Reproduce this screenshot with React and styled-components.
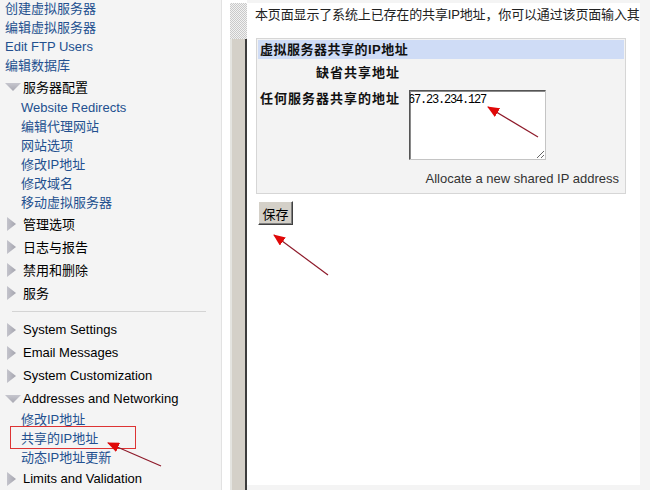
import React from "react";
import styled, { createGlobalStyle } from "styled-components";

const GlobalStyle = createGlobalStyle`
  body {
    margin: 0;
    overflow: hidden;
    background: #f4f4f4;
  }
`;

const FONT = `"Liberation Sans", "Noto Sans CJK SC", Arial, sans-serif`;

const navTop = ["创建虚拟服务器", "编辑虚拟服务器", "Edit FTP Users", "编辑数据库"];

const serverLinks = [
  "Website Redirects",
  "编辑代理网站",
  "网站选项",
  "修改IP地址",
  "修改域名",
  "移动虚拟服务器",
];

const moduleGroups = ["管理选项", "日志与报告", "禁用和删除", "服务"];
const systemGroups = ["System Settings", "Email Messages", "System Customization"];

const netLinks = ["修改IP地址", "共享的IP地址", "动态IP地址更新"];

const Arrow = ({ open }) =>
  open ? (
    <svg width="16" height="8" viewBox="0 0 16 8">
      <defs>
        <linearGradient id="down" x1="0" y1="0" x2="0" y2="1">
          <stop offset="0" stopColor="#c6c6ce" />
          <stop offset="1" stopColor="#a8a8b2" />
        </linearGradient>
      </defs>
      <polygon points="0,0 16,0 8,8" fill="url(#down)" />
    </svg>
  ) : (
    <svg width="9" height="14" viewBox="0 0 9 14">
      <defs>
        <linearGradient id="right" x1="0" y1="0" x2="1" y2="0">
          <stop offset="0" stopColor="#c4c4cc" />
          <stop offset="1" stopColor="#a4a4ae" />
        </linearGradient>
      </defs>
      <polygon points="0,0 9,7 0,14" fill="url(#right)" />
    </svg>
  );

const App = () => {
  return (
    <Page>
      <GlobalStyle />
      <Sidebar>
        <LinkList>
          {navTop.map((t) => (
            <NavLink key={t} $indent={5}>
              {t}
            </NavLink>
          ))}
        </LinkList>
        <Category>
          <IconBox $open>
            <Arrow open />
          </IconBox>
          服务器配置
        </Category>
        {serverLinks.map((t) => (
          <NavLink key={t} $indent={21}>
            {t}
          </NavLink>
        ))}
        {moduleGroups.map((t) => (
          <Category key={t}>
            <IconBox>
              <Arrow />
            </IconBox>
            {t}
          </Category>
        ))}
        <Separator />
        {systemGroups.map((t) => (
          <Category key={t}>
            <IconBox>
              <Arrow />
            </IconBox>
            {t}
          </Category>
        ))}
        <Category>
          <IconBox $open>
            <Arrow open />
          </IconBox>
          Addresses and Networking
        </Category>
        {netLinks.map((t, i) => (
          <NavLink key={t} $indent={21} $marked={i === 1}>
            {t}
          </NavLink>
        ))}
        <Category>
          <IconBox>
            <Arrow />
          </IconBox>
          Limits and Validation
        </Category>
      </Sidebar>

      <Gutter />
      <Splitter>
        <Grip />
        <Bar />
      </Splitter>

      <Main>
        <Content>
          <Intro>本页面显示了系统上已存在的共享IP地址，你可以通过该页面输入其</Intro>
          <FormBox>
            <FormHeader>虚拟服务器共享的IP地址</FormHeader>
            <Label>缺省共享地址</Label>
            <Value />
            <Label $top>任何服务器共享的地址</Label>
            <Value>
              <IpArea readOnly defaultValue="67.23.234.127" />
            </Value>
            <Hint>Allocate a new shared IP address</Hint>
          </FormBox>
          <SaveButton type="button">保存</SaveButton>
        </Content>
      </Main>

      <Annotations width="650" height="490" viewBox="0 0 650 490">
        <defs>
          <marker
            id="head"
            markerWidth="12"
            markerHeight="10"
            refX="11"
            refY="5"
            orient="auto"
            markerUnits="userSpaceOnUse"
          >
            <polygon points="0,0 12,5 0,10" fill="#e00808" />
          </marker>
        </defs>
        <line x1="538" y1="137" x2="488" y2="107" stroke="#8e1a2a" strokeWidth="1.2" markerEnd="url(#head)" />
        <line x1="328" y1="275" x2="274" y2="235" stroke="#8e1a2a" strokeWidth="1.2" markerEnd="url(#head)" />
        <line x1="161" y1="466" x2="108" y2="443" stroke="#8e1a2a" strokeWidth="1.2" markerEnd="url(#head)" />
      </Annotations>
    </Page>
  );
};

export default App;

const Page = styled.div`
  position: relative;
  display: flex;
  width: 650px;
  height: 490px;
  overflow: hidden;
  background: #f4f4f4;
  font-family: ${FONT};
  font-size: 13px;
`;

const Sidebar = styled.nav`
  flex-shrink: 0;
  width: 221px;
  display: flex;
  flex-direction: column;
  background: #f4f4f4;
  border-right: 1px solid #e2e2e2;
`;

const LinkList = styled.div`
  display: flex;
  flex-direction: column;
  margin-top: -1px;
`;

const NavLink = styled.a`
  position: relative;
  display: block;
  height: 19px;
  line-height: 19px;
  padding-left: ${(p) => p.$indent}px;
  color: #23508f;
  text-decoration: none;
  white-space: nowrap;

  ${(p) =>
    p.$marked &&
    `
    &::after {
      content: "";
      position: absolute;
      left: 10px;
      top: -3px;
      width: 124px;
      height: 21px;
      border: 1px solid #dd3333;
    }
  `}
`;

const Category = styled.div`
  display: flex;
  align-items: center;
  height: 23px;
  color: #000;
  white-space: nowrap;
`;

const IconBox = styled.span`
  display: flex;
  align-items: center;
  width: ${(p) => (p.$open ? 18 : 16)}px;
  padding-left: ${(p) => (p.$open ? 5 : 7)}px;
  margin-top: ${(p) => (p.$open ? 0 : 1)}px;
`;

const Separator = styled.div`
  height: 14px;
  margin: 0 15px 0 12px;
  background: linear-gradient(#d4d4d4, #d4d4d4) 0 7px / 100% 1px no-repeat;
`;

const Gutter = styled.div`
  flex-shrink: 0;
  width: 8px;
  background: #fff;
`;

const Splitter = styled.div`
  flex-shrink: 0;
  width: 17px;
  display: flex;
  flex-direction: column;
  padding-top: 3px;
  background: #fff;
`;

const Grip = styled.div`
  height: 36px;
  background: repeating-conic-gradient(#c9c9c9 0 25%, #f2f2f2 0 50%) 0 0 / 2px 2px;
`;

const Bar = styled.div`
  flex: 1;
  background: #d4d0c8;
  border-left: 2px solid #e4e4e0;
  border-right: 2px solid #3c3c3c;
`;

const Main = styled.main`
  flex: 1;
  min-width: 0;
  padding: 3px 10px 5px 0;
`;

const Content = styled.div`
  height: 100%;
  overflow: hidden;
  background: #fff;
  padding: 0 0 0 8px;
  box-sizing: border-box;
`;

const Intro = styled.div`
  height: 22px;
  line-height: 24px;
  color: #222;
  white-space: nowrap;
  letter-spacing: -0.15px;
  margin-bottom: 13px;
`;

const FormBox = styled.div`
  display: grid;
  grid-template-columns: 145px 1fr;
  width: 366px;
  margin-left: 1px;
  padding: 1px;
  border: 1px solid #d6d6d6;
  background: #f3f3f3;
`;

const FormHeader = styled.div`
  grid-column: 1 / -1;
  height: 19px;
  line-height: 20px;
  padding-left: 2px;
  background: #cfdcf6;
  font-weight: 700;
  color: #111;
  letter-spacing: 0.5px;
`;

const Label = styled.div`
  padding: ${(p) => (p.$top ? "4px 3px 0 0" : "5px 3px 5px 0")};
  line-height: ${(p) => (p.$top ? 18 : 17)}px;
  text-align: right;
  font-weight: 700;
  color: #111;
  letter-spacing: 1px;
  white-space: nowrap;
`;

const Value = styled.div`
  padding-left: 6px;
`;

const IpArea = styled.textarea`
  display: block;
  width: 137px;
  height: 70px;
  margin-top: 4px;
  box-sizing: border-box;
  padding: 2px 0 0 0;
  text-indent: -2px;
  border: 1px solid;
  border-color: #555 #c4c4c4 #c4c4c4 #555;
  box-shadow: inset 1px 1px 0 #8a8a8a;
  background: #fff;
  font-family: "Liberation Mono", "DejaVu Sans Mono", monospace;
  font-size: 12px;
  line-height: 14px;
  letter-spacing: -1.2px;
  color: #000;
  outline: none;
`;

const Hint = styled.div`
  grid-column: 1 / -1;
  padding: 10px 5px 4px 0;
  line-height: 18px;
  text-align: right;
  color: #333;
`;

const SaveButton = styled.button`
  display: block;
  width: 35px;
  height: 24px;
  margin: 7px 0 0 3px;
  padding: 0;
  background: #d4d0c8;
  border: 1px solid;
  border-color: #fff #404040 #404040 #fff;
  box-shadow: inset -1px -1px 0 #808080;
  font-family: ${FONT};
  font-size: 13px;
  color: #000;
`;

const Annotations = styled.svg`
  position: absolute;
  left: 0;
  top: 0;
  pointer-events: none;
`;
